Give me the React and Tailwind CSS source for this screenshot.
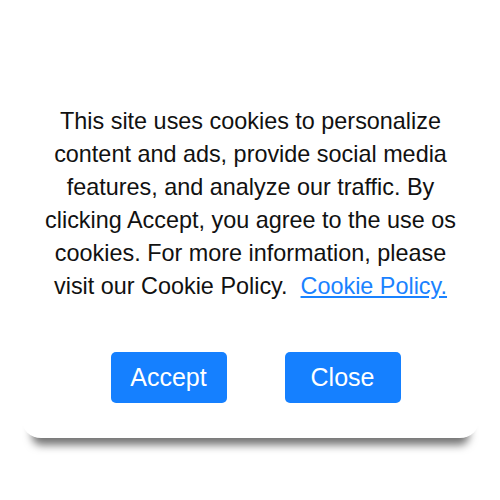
export default function App() {
  return (
    <div className="w-[500px] h-[500px] bg-white overflow-hidden" style={{ fontFamily: '"Liberation Sans", Arial, sans-serif' }}>
      <div className="ml-[21px] w-[459px] h-[438px] bg-white rounded-b-[20px] shadow-[0_18px_8px_-11px_rgba(0,0,0,0.55)] flex flex-col items-center pt-[105px]">
        <p className="w-[426px] text-center text-[23.4px] leading-[33px] text-[#111]">
          This site uses cookies to personalize content and ads, provide social media features, and analyze our traffic. By clicking Accept, you agree to the use os cookies. For more information, please visit our Cookie Policy.{"\u00a0 "}
          <a href="#" className="text-[#1a82ff] underline">Cookie Policy.</a>
        </p>
        <div className="flex gap-[58px] mt-[49px] pl-[10px]">
          <button className="w-[116px] h-[51px] rounded-[5px] bg-[#1580ff] text-white text-[25px]">Accept</button>
          <button className="w-[116px] h-[51px] rounded-[5px] bg-[#1580ff] text-white text-[25px]">Close</button>
        </div>
      </div>
    </div>
  );
}
